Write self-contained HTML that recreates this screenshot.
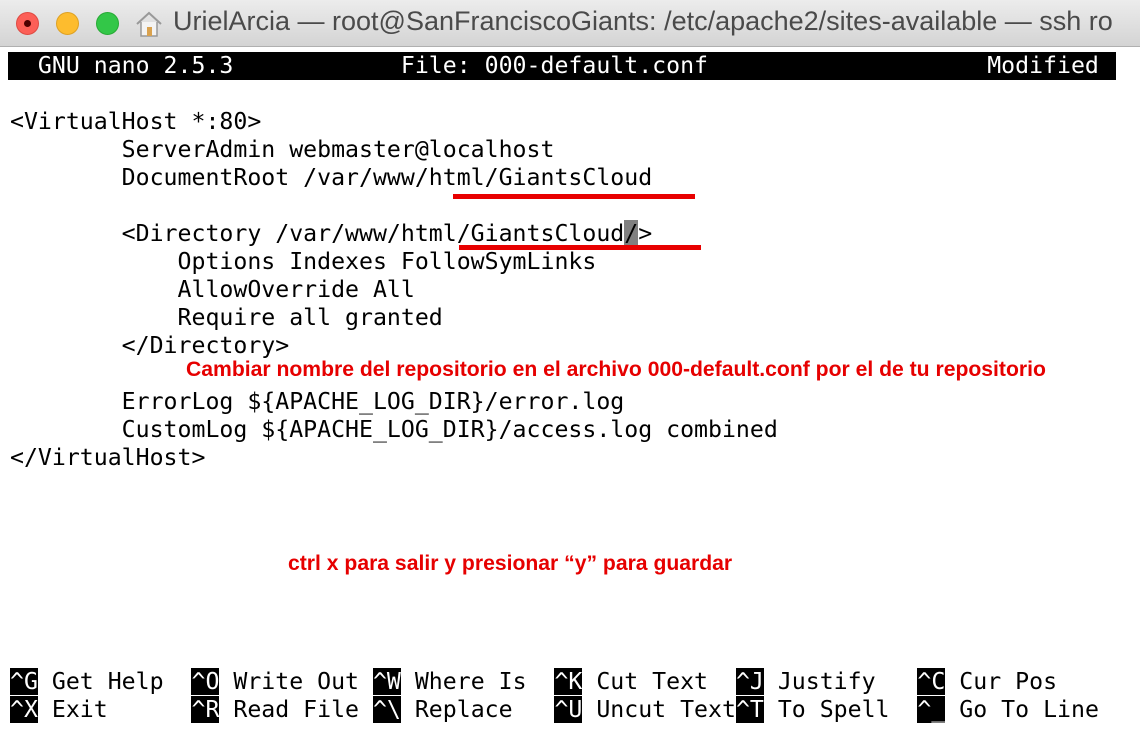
<!DOCTYPE html>
<html><head><meta charset="utf-8"><style>
html,body{margin:0;padding:0;width:1140px;height:733px;overflow:hidden;background:#fff;}
.tb{position:absolute;left:0;top:0;width:1140px;height:46px;background:linear-gradient(#ececec,#d4d4d4);border-bottom:1px solid #b0b0b0;}
.dot{position:absolute;top:12px;width:23px;height:23px;border-radius:50%;}
.title{position:absolute;left:173px;top:6px;font:27px "Liberation Sans",sans-serif;color:#4a4a4a;white-space:nowrap;}
.l{position:absolute;left:10px;font:23.2px/28px "DejaVu Sans Mono",monospace;white-space:pre;color:#000;height:28px;}
.hdr{position:absolute;left:8px;top:52px;width:1108px;height:28px;background:#000;}
.inv{background:#000;color:#fff;}
.red{position:absolute;font:bold 21.15px "Liberation Sans",sans-serif;color:#e60000;white-space:nowrap;}
.ul{position:absolute;height:5px;background:#e80000;}
</style></head><body>
<div class="tb">
<div class="dot" style="left:16px;background:#fc5f57;border:1px solid #de4a42;box-sizing:border-box"><div style="position:absolute;left:7px;top:7px;width:7px;height:7px;border-radius:50%;background:#4d0000"></div></div>
<div class="dot" style="left:56px;background:#fdbc2e;border:1px solid #dea123;box-sizing:border-box"></div>
<div class="dot" style="left:96px;background:#33c748;border:1px solid #27aa35;box-sizing:border-box"></div>
<svg style="position:absolute;left:135px;top:11px" width="28" height="26" viewBox="0 0 28 26"><path d="M2 13 L14 2 L26 13" fill="none" stroke="#999" stroke-width="2"/><path d="M6 11 V25 H22 V11" fill="#f3f3f3" stroke="#999" stroke-width="1.5"/><rect x="12" y="16" width="5" height="9" fill="#d9a24f"/></svg>
<div class="title">UrielArcia — root@SanFranciscoGiants: /etc/apache2/sites-available — ssh ro</div>
</div>
<div class="hdr"></div>
<div class="l" style="top:52px;color:#fff">  GNU nano 2.5.3            File: 000-default.conf                    Modified</div>
<div class="l" style="top:108px">&lt;VirtualHost *:80&gt;</div>
<div class="l" style="top:136px">        ServerAdmin webmaster@localhost</div>
<div class="l" style="top:164px">        DocumentRoot /var/www/html/GiantsCloud</div>
<div class="l" style="top:220px">        &lt;Directory /var/www/html/GiantsCloud<span style="background:#808080">/</span>&gt;</div>
<div class="l" style="top:248px">            Options Indexes FollowSymLinks</div>
<div class="l" style="top:276px">            AllowOverride All</div>
<div class="l" style="top:304px">            Require all granted</div>
<div class="l" style="top:332px">        &lt;/Directory&gt;</div>
<div class="l" style="top:388px">        ErrorLog ${APACHE_LOG_DIR}/error.log</div>
<div class="l" style="top:416px">        CustomLog ${APACHE_LOG_DIR}/access.log combined</div>
<div class="l" style="top:444px">&lt;/VirtualHost&gt;</div>
<div class="ul" style="left:453px;top:194px;width:242px"></div>
<div class="ul" style="left:459px;top:245px;width:242px"></div>
<div class="red" style="left:186px;top:358px">Cambiar nombre del repositorio en el archivo 000-default.conf por el de tu repositorio</div>
<div class="red" style="left:288px;top:552px">ctrl x para salir y presionar “y” para guardar</div>
<div class="l" style="top:668px"><span class="inv">^G</span> Get Help  <span class="inv">^O</span> Write Out <span class="inv">^W</span> Where Is  <span class="inv">^K</span> Cut Text  <span class="inv">^J</span> Justify   <span class="inv">^C</span> Cur Pos</div>
<div class="l" style="top:696px"><span class="inv">^X</span> Exit      <span class="inv">^R</span> Read File <span class="inv">^\</span> Replace   <span class="inv">^U</span> Uncut Text<span class="inv">^T</span> To Spell  <span class="inv">^_</span> Go To Line</div>
</body></html>
